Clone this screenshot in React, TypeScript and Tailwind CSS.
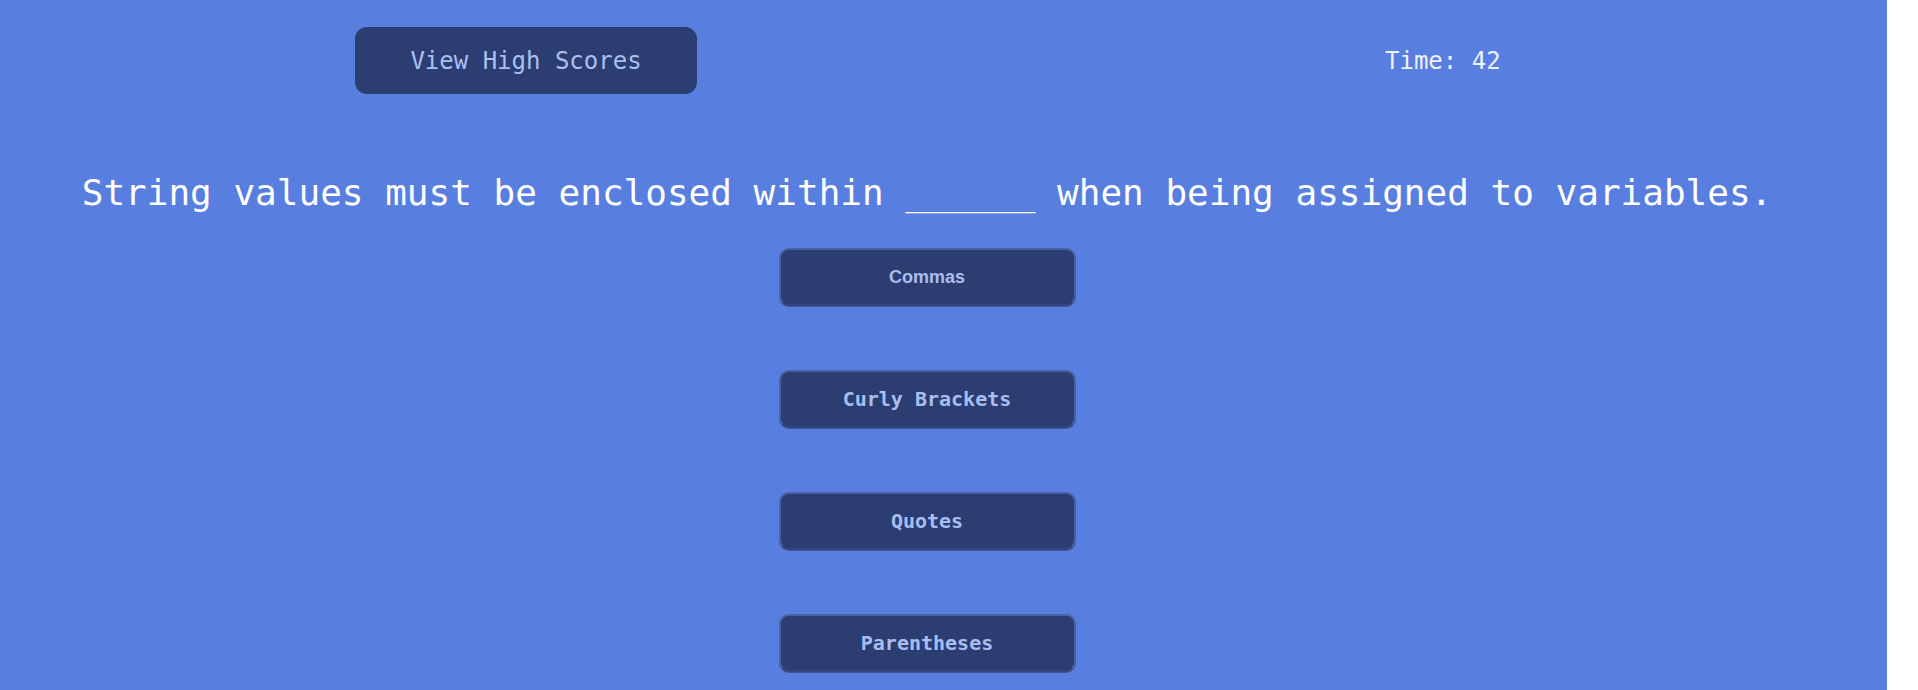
const answers = ['Commas', 'Curly Brackets', 'Quotes', 'Parentheses'];

function AnswerButton({ label, first }: { label: string; first?: boolean }) {
  return (
    <button
      type="button"
      className={
        'w-[297px] h-[58px] rounded-[10px] bg-[#2c3d71] border-2 border-[#4a60a3] border-b-[#34467e] text-[#a8bef0] shadow-[0_1px_0_#3e5599] ' +
        (first
          ? "font-['Liberation_Sans',sans-serif] text-[18px] font-semibold"
          : "font-['DejaVu_Sans_Mono',monospace] text-[20px] font-semibold")
      }
    >
      {label}
    </button>
  );
}

export default function App() {
  return (
    <div className="w-full h-[690px] bg-white">
      <div className="w-[1887px] h-full bg-[#587ee0] font-['DejaVu_Sans_Mono',monospace]">
        <header className="flex items-center pt-[27px]">
          <button
            type="button"
            className="ml-[355px] w-[342px] h-[67px] rounded-[12px] bg-[#2c3d71] text-[#a9c0f2] text-[24px] font-light"
          >
            View High Scores
          </button>
          <div className="ml-[688px] text-[24px] text-[#eef2fd] font-light">Time: 42</div>
        </header>
        <main className="w-[1854px] flex flex-col items-center">
          <h1 className="mt-[77px] text-[36px] leading-[43px] text-white">
            String values must be enclosed within ______ when being assigned to variables.
          </h1>
          <div className="mt-[34px] flex flex-col gap-[64px]">
            {answers.map((a, i) => (
              <AnswerButton key={a} label={a} first={i === 0} />
            ))}
          </div>
        </main>
      </div>
    </div>
  );
}
